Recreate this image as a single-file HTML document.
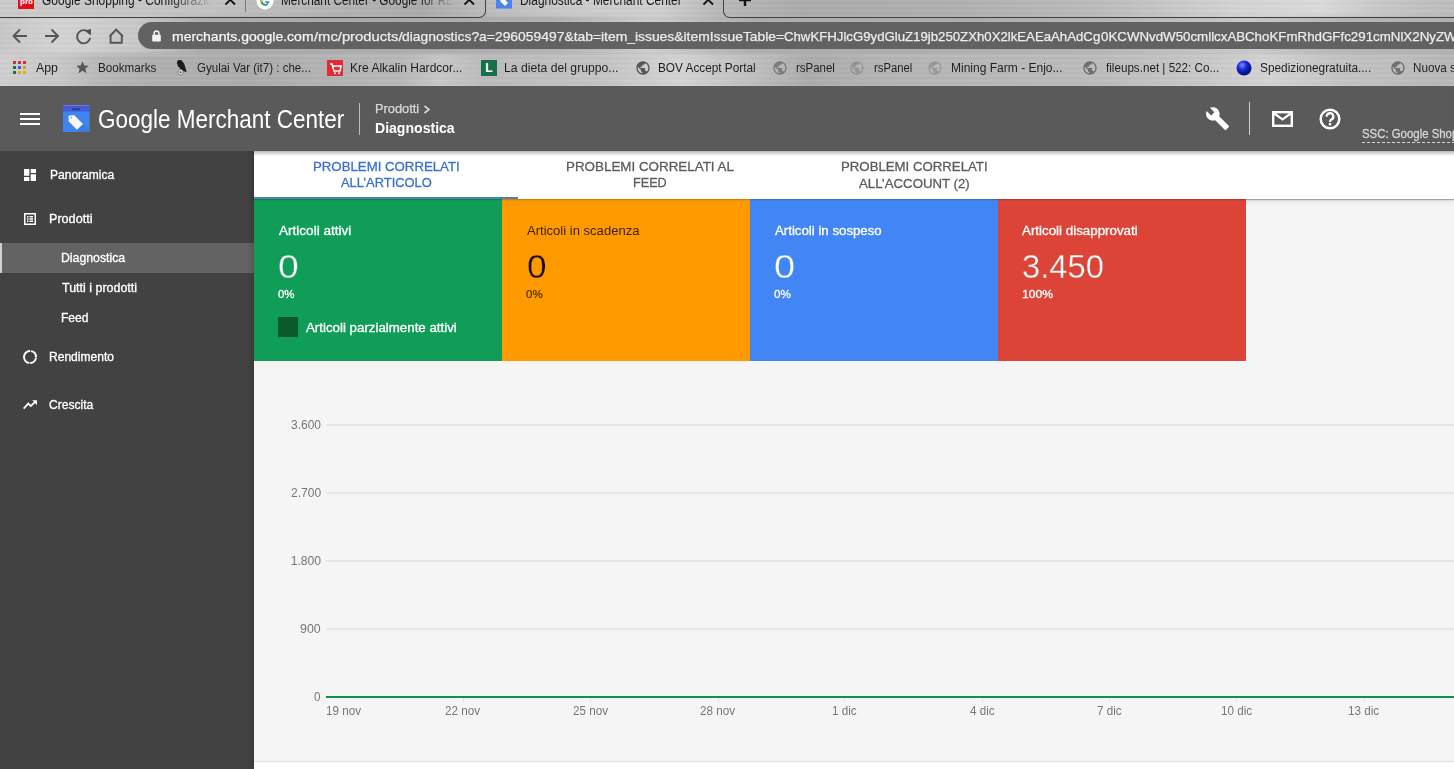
<!DOCTYPE html>
<html><head><meta charset="utf-8"><style>
*{box-sizing:border-box;margin:0;padding:0}
html,body{width:1454px;height:769px;overflow:hidden;background:#f5f5f5;font-family:"Liberation Sans",sans-serif}
.abs{position:absolute}
.t{position:absolute;white-space:nowrap;transform-origin:0 0;line-height:normal}
#chrome{position:absolute;left:0;top:0;width:1454px;height:86px;overflow:hidden;background:#c4c4c4}
#mt1{position:absolute;left:0;top:0;width:1454px;height:18px;background:linear-gradient(90deg,#cccccc 0px,#c8c8c8 100px,#c4c4c4 200px,#b8b8b8 300px,#acacac 420px,#bcbcbc 485px,#cacaca 560px,#d0d0d0 660px,#b8b8b8 720px,#acacac 800px,#b0b0b0 950px,#bcbcbc 1100px,#d4d4d4 1240px,#dadada 1320px,#c8c8c8 1380px,#bcbcbc 1454px)}
#mt2{position:absolute;left:0;top:14px;width:1454px;height:46px;-webkit-mask-image:linear-gradient(180deg,transparent 0,#000 5px,#000 38px,transparent 46px);background:linear-gradient(90deg,#c8c8c8 0px,#d4d4d4 60px,#c8c8c8 138px,#acacac 200px,#a8a8a8 400px,#b0b0b0 550px,#cccccc 650px,#acacac 750px,#acacac 970px,#b4b4b4 1100px,#c8c8c8 1250px,#b4b4b4 1340px,#b0b0b0 1454px)}
#mt3{position:absolute;left:0;top:50px;width:1454px;height:36px;-webkit-mask-image:linear-gradient(180deg,transparent 0,#000 8px);background:linear-gradient(90deg,#d0d0d0 0px,#c8c8c8 60px,#b8b8b8 100px,#b0b0b0 150px,#acacac 250px,#b4b4b4 330px,#b8b8b8 400px,#c8c8c8 440px,#bcbcbc 485px,#c4c4c4 600px,#d4d4d4 680px,#c0c0c0 750px,#acacac 810px,#b4b4b4 870px,#b8b8b8 970px,#bcbcbc 1100px,#c8c8c8 1200px,#d4d4d4 1270px,#c4c4c4 1340px,#b8b8b8 1454px)}
#streaks{position:absolute;left:0;top:0;width:1454px;height:86px;
background:repeating-linear-gradient(180deg,rgba(255,255,255,.05) 0px,rgba(255,255,255,0) 2px,rgba(0,0,0,.03) 3px,rgba(255,255,255,0) 5px)}
#header{position:absolute;left:0;top:86px;width:1454px;height:65px;background:#5a5a5a}
#side{position:absolute;left:0;top:151px;width:254px;height:618px;background:#424242}
#main{position:absolute;left:254px;top:151px;width:1200px;height:618px;background:#f5f5f5}
</style></head><body>
<div id="chrome"><div id="mt1"></div><div id="mt2"></div><div id="mt3"></div><div id="streaks"></div>
<div class="abs" style="left:0;top:17px;width:476px;height:1px;background:#404040"></div>
<div class="abs" style="left:730px;top:17px;width:724px;height:1px;background:#404040"></div>
<div class="abs" style="left:18px;top:-2px;width:16px;height:11px;background:#e0101a"></div>
<div class="abs" style="left:20px;top:-3px;font-size:8px;color:#fff;font-weight:bold">pro</div>
<div class="t" style="left:41.90px;top:-8px;font-size:14px;font-weight:normal;color:#1a1a1a;transform:scaleX(0.8558);-webkit-mask-image:linear-gradient(90deg,#000 75%,transparent 100%)">Google Shopping - Configurazio</div>
<svg class="abs" style="left:224px;top:-4px" width="13" height="11" viewBox="0 0 13 11"><path d="M1.5 -1L11 8.5M11 -1L1.5 8.5" stroke="#111" stroke-width="1.8"/></svg>
<div class="abs" style="left:245px;top:0;width:1px;height:12px;background:#777"></div>
<svg class="abs" style="left:256px;top:-8px" width="18" height="18" viewBox="0 0 18 18"><circle cx="9" cy="9" r="8.5" fill="#fff"/><path d="M13.5 9.2H9.2V11H11.7A2.9 2.9 0 1 1 11 6.5L12.3 5.2A4.8 4.8 0 1 0 13.6 9.2Z" fill="#4285f4"/><path d="M4.6 10.6A4.8 4.8 0 0 0 12.3 12.6L11 11.4A2.9 2.9 0 0 1 6.4 10Z" fill="#34a853"/><path d="M4.6 7.2A4.8 4.8 0 0 0 4.6 10.6L6.4 10A2.9 2.9 0 0 1 6.4 7.9Z" fill="#fbbc05"/><path d="M4.6 7.2L6.4 7.9A2.9 2.9 0 0 1 11 6.5L12.3 5.2A4.8 4.8 0 0 0 4.6 7.2Z" fill="#ea4335"/></svg>
<div class="t" style="left:281.16px;top:-8px;font-size:14px;font-weight:normal;color:#1a1a1a;transform:scaleX(0.8426);-webkit-mask-image:linear-gradient(90deg,#000 80%,transparent 100%)">Merchant Center - Google for RE</div>
<svg class="abs" style="left:463px;top:-4px" width="13" height="11" viewBox="0 0 13 11"><path d="M1.5 -1L11 8.5M11 -1L1.5 8.5" stroke="#111" stroke-width="1.8"/></svg>
<div class="abs" style="left:476px;top:-4px;width:10px;height:22px;border-right:1px solid #444;border-bottom:1px solid #444;border-radius:0 0 7px 0"></div>
<svg class="abs" style="left:496px;top:-5px" width="17" height="14" viewBox="0 0 17 14"><rect x="0" y="0" width="16" height="13.5" fill="#4a84ee"/><path d="M4 3L8 3.5L12 8L9 11L4.5 6.5Z" fill="#fff"/></svg>
<div class="t" style="left:519.65px;top:-8px;font-size:14px;font-weight:normal;color:#1a1a1a;transform:scaleX(0.8516);">Diagnostica - Merchant Center</div>
<svg class="abs" style="left:702px;top:-4px" width="13" height="11" viewBox="0 0 13 11"><path d="M1.5 -1L11 8.5M11 -1L1.5 8.5" stroke="#111" stroke-width="1.8"/></svg>
<div class="abs" style="left:723px;top:-4px;width:10px;height:22px;border-left:1px solid #444;border-bottom:1px solid #444;border-radius:0 0 0 7px"></div>
<svg class="abs" style="left:738px;top:-4px" width="14" height="12" viewBox="0 0 14 12"><path d="M7 -2V10M1 4H13" stroke="#111" stroke-width="2.4"/></svg>
<svg class="abs" style="left:0;top:20px" width="140" height="32" viewBox="0 20 140 32">
<g fill="none" stroke="#555" stroke-width="1.9">
<path d="M27 36H14M20 29.5L13.5 36L20 42.5"/>
<path d="M45 36H58M51.5 29.5L58 36L51.5 42.5"/>
<path d="M89.5 33.5A6.6 6.6 0 1 0 90.2 38"/>
<path d="M109.5 36.5L116.2 29.5L123 36.5M110.6 35.5V42.8H121.8V35.5"/>
</g>
<path d="M84.5 30.5L91 29L91 35.5Z" fill="#555"/>
</svg>
<div class="abs" style="left:138px;top:22px;width:1340px;height:27px;border-radius:14px;background:#626262"></div>
<svg class="abs" style="left:151.5px;top:29.5px" width="9" height="12" viewBox="0 0 9 12">
<rect x="0.2" y="4.8" width="8.6" height="6.8" rx="0.8" fill="#f4f4f4"/>
<path d="M2.1 5.2V3.4A2.4 2.4 0 0 1 6.9 3.4V5.2" fill="none" stroke="#f4f4f4" stroke-width="1.5"/></svg>
<div class="t" style="left:171.96px;top:29px;font-size:13px;font-weight:normal;color:#f6f6f6;transform:scaleX(1.0762);-webkit-text-stroke:0.25px #f6f6f6">merchants.google.com</div>
<div class="t" style="left:313.50px;top:29px;font-size:13px;font-weight:normal;color:#ececec;transform:scaleX(1.1356);-webkit-text-stroke:0.25px #ececec">/mc/products/</div>
<div class="t" style="left:402.15px;top:29px;font-size:13px;font-weight:normal;color:#ececec;transform:scaleX(1.0672);-webkit-text-stroke:0.25px #ececec">diagnostics?a=296059497&amp;tab=item_issues&amp;itemIssueTable=</div>
<div class="t" style="left:784.34px;top:29px;font-size:13px;font-weight:normal;color:#ececec;transform:scaleX(1.0154);-webkit-text-stroke:0.25px #ececec">ChwKFHJlcG9ydGluZ19jb250ZXh0X2lkEAEaAhAdCg</div>
<div class="t" style="left:1100.57px;top:29px;font-size:13px;font-weight:normal;color:#ececec;transform:scaleX(1.0235);-webkit-text-stroke:0.25px #ececec">0KCWNvdW50cmllcxAB</div>
<div class="t" style="left:1245px;top:29px;font-size:13px;color:#ececec;-webkit-text-stroke:0.25px #ececec;transform:scaleX(1.0244)">ChoKFmRhdGFfc291cmNlX2NyZWF0aW9u</div>
<svg class="abs" style="left:12px;top:60px" width="15" height="15" viewBox="0 0 15 15">
<rect x="1" y="1" width="3" height="3" fill="#c43340"/><rect x="6" y="1" width="3" height="3" fill="#d02c44"/><rect x="11" y="1" width="3" height="3" fill="#c83040"/>
<rect x="1" y="6" width="3" height="3" fill="#226e40"/><rect x="6" y="6" width="3" height="3" fill="#1f70c4"/><rect x="11" y="6" width="3" height="3" fill="#dca21e"/>
<rect x="1" y="11" width="3" height="3" fill="#226e40"/><rect x="6" y="11" width="3" height="3" fill="#e3aa1c"/><rect x="11" y="11" width="3" height="3" fill="#e3aa1c"/></svg>
<div class="t" style="left:35.90px;top:61px;font-size:12px;font-weight:normal;color:#1e1e1e;transform:scaleX(1.0297);">App</div>
<svg class="abs" style="left:75px;top:60px" width="15" height="15" viewBox="0 0 24 24"><path fill="#555" d="M12 17.27L18.18 21l-1.64-7.03L22 9.24l-7.19-.61L12 2 9.19 8.63 2 9.24l5.46 4.73L5.82 21z"/></svg>
<div class="t" style="left:98.07px;top:61px;font-size:12px;font-weight:normal;color:#1e1e1e;transform:scaleX(0.9714);">Bookmarks</div>
<svg class="abs" style="left:176px;top:59px" width="12" height="17" viewBox="0 0 12 17"><circle cx="3.6" cy="3.6" r="2.6" fill="#1a1a1a"/><path d="M1.2 3.2L5.5 1.2L8.2 4.8L10.6 12.6L9.4 13.1L5.2 10.4L1.8 7Z" fill="#1a1a1a"/><circle cx="4.6" cy="13.2" r="2.7" fill="#e0e0e0" stroke="#4a4a4a" stroke-width="0.9" stroke-dasharray="1.2 0.5"/><circle cx="4.6" cy="13.2" r="0.9" fill="#333"/></svg>
<div class="t" style="left:196.92px;top:61px;font-size:12px;font-weight:normal;color:#1e1e1e;transform:scaleX(0.9608);">Gyulai Var (it7) : che...</div>
<div class="abs" style="left:327px;top:60px;width:16px;height:16px;background:#e32b35"></div>
<svg class="abs" style="left:328px;top:61px" width="15" height="15" viewBox="0 0 15 15"><path d="M2 3H4L6 10H12L13 5H5" fill="none" stroke="#fff" stroke-width="1.5"/><circle cx="7" cy="12.3" r="1" fill="#fff"/><circle cx="11" cy="12.3" r="1" fill="#fff"/></svg>
<div class="t" style="left:350.04px;top:61px;font-size:12px;font-weight:normal;color:#1e1e1e;transform:scaleX(1.0033);">Kre Alkalin Hardcor...</div>
<div class="abs" style="left:481px;top:60px;width:16px;height:16px;background:#17704b;color:#fff;font-weight:bold;font-size:12px;text-align:center;line-height:16px">L</div>
<div class="t" style="left:504.03px;top:61px;font-size:12px;font-weight:normal;color:#1e1e1e;transform:scaleX(1.0148);">La dieta del gruppo...</div>
<svg class="abs" style="left:635px;top:60px" width="16" height="16" viewBox="0 0 24 24"><path fill="#555" d="M12 2C6.48 2 2 6.48 2 12s4.48 10 10 10 10-4.48 10-10S17.52 2 12 2zm-1 17.93c-3.95-.49-7-3.85-7-7.93 0-.62.08-1.21.21-1.79L9 15v1c0 1.1.9 2 2 2v1.93zm6.9-2.54c-.26-.81-1-1.39-1.9-1.39h-1v-3c0-.55-.45-1-1-1H8v-2h2c.55 0 1-.45 1-1V7h2c1.1 0 2-.9 2-2v-.41c2.93 1.19 5 4.06 5 7.41 0 2.08-.8 3.97-2.1 5.39z"/></svg>
<div class="t" style="left:658.06px;top:61px;font-size:12px;font-weight:normal;color:#1e1e1e;transform:scaleX(0.9828);">BOV Accept Portal</div>
<svg class="abs" style="left:772px;top:60px;opacity:.6" width="16" height="16" viewBox="0 0 24 24"><path fill="#555" d="M12 2C6.48 2 2 6.48 2 12s4.48 10 10 10 10-4.48 10-10S17.52 2 12 2zm-1 17.93c-3.95-.49-7-3.85-7-7.93 0-.62.08-1.21.21-1.79L9 15v1c0 1.1.9 2 2 2v1.93zm6.9-2.54c-.26-.81-1-1.39-1.9-1.39h-1v-3c0-.55-.45-1-1-1H8v-2h2c.55 0 1-.45 1-1V7h2c1.1 0 2-.9 2-2v-.41c2.93 1.19 5 4.06 5 7.41 0 2.08-.8 3.97-2.1 5.39z"/></svg>
<div class="t" style="left:795.51px;top:61px;font-size:12px;font-weight:normal;color:#1e1e1e;transform:scaleX(0.9557);">rsPanel</div>
<svg class="abs" style="left:849px;top:60px;opacity:.3" width="16" height="16" viewBox="0 0 24 24"><path fill="#555" d="M12 2C6.48 2 2 6.48 2 12s4.48 10 10 10 10-4.48 10-10S17.52 2 12 2zm-1 17.93c-3.95-.49-7-3.85-7-7.93 0-.62.08-1.21.21-1.79L9 15v1c0 1.1.9 2 2 2v1.93zm6.9-2.54c-.26-.81-1-1.39-1.9-1.39h-1v-3c0-.55-.45-1-1-1H8v-2h2c.55 0 1-.45 1-1V7h2c1.1 0 2-.9 2-2v-.41c2.93 1.19 5 4.06 5 7.41 0 2.08-.8 3.97-2.1 5.39z"/></svg>
<div class="t" style="left:873.92px;top:61px;font-size:12px;font-weight:normal;color:#1e1e1e;transform:scaleX(0.9404);">rsPanel</div>
<svg class="abs" style="left:927px;top:60px;opacity:.3" width="16" height="16" viewBox="0 0 24 24"><path fill="#555" d="M12 2C6.48 2 2 6.48 2 12s4.48 10 10 10 10-4.48 10-10S17.52 2 12 2zm-1 17.93c-3.95-.49-7-3.85-7-7.93 0-.62.08-1.21.21-1.79L9 15v1c0 1.1.9 2 2 2v1.93zm6.9-2.54c-.26-.81-1-1.39-1.9-1.39h-1v-3c0-.55-.45-1-1-1H8v-2h2c.55 0 1-.45 1-1V7h2c1.1 0 2-.9 2-2v-.41c2.93 1.19 5 4.06 5 7.41 0 2.08-.8 3.97-2.1 5.39z"/></svg>
<div class="t" style="left:951.24px;top:61px;font-size:12px;font-weight:normal;color:#1e1e1e;transform:scaleX(1.0016);">Mining Farm - Enjo...</div>
<svg class="abs" style="left:1082px;top:60px;opacity:.75" width="16" height="16" viewBox="0 0 24 24"><path fill="#555" d="M12 2C6.48 2 2 6.48 2 12s4.48 10 10 10 10-4.48 10-10S17.52 2 12 2zm-1 17.93c-3.95-.49-7-3.85-7-7.93 0-.62.08-1.21.21-1.79L9 15v1c0 1.1.9 2 2 2v1.93zm6.9-2.54c-.26-.81-1-1.39-1.9-1.39h-1v-3c0-.55-.45-1-1-1H8v-2h2c.55 0 1-.45 1-1V7h2c1.1 0 2-.9 2-2v-.41c2.93 1.19 5 4.06 5 7.41 0 2.08-.8 3.97-2.1 5.39z"/></svg>
<div class="t" style="left:1105.98px;top:61px;font-size:12px;font-weight:normal;color:#1e1e1e;transform:scaleX(0.9712);">fileups.net | 522: Co...</div>
<svg class="abs" style="left:1236px;top:60px" width="16" height="16" viewBox="0 0 16 16"><defs><radialGradient id="bb" cx="38%" cy="32%" r="70%"><stop offset="0" stop-color="#7d8cff"/><stop offset=".45" stop-color="#1428d0"/><stop offset="1" stop-color="#000a78"/></radialGradient></defs><circle cx="8" cy="8" r="7.5" fill="url(#bb)"/></svg>
<div class="t" style="left:1260.11px;top:61px;font-size:12px;font-weight:normal;color:#1e1e1e;transform:scaleX(0.9863);">Spedizionegratuita....</div>
<svg class="abs" style="left:1390px;top:60px;opacity:.75" width="16" height="16" viewBox="0 0 24 24"><path fill="#555" d="M12 2C6.48 2 2 6.48 2 12s4.48 10 10 10 10-4.48 10-10S17.52 2 12 2zm-1 17.93c-3.95-.49-7-3.85-7-7.93 0-.62.08-1.21.21-1.79L9 15v1c0 1.1.9 2 2 2v1.93zm6.9-2.54c-.26-.81-1-1.39-1.9-1.39h-1v-3c0-.55-.45-1-1-1H8v-2h2c.55 0 1-.45 1-1V7h2c1.1 0 2-.9 2-2v-.41c2.93 1.19 5 4.06 5 7.41 0 2.08-.8 3.97-2.1 5.39z"/></svg>
<div class="t" style="left:1413.16px;top:61px;font-size:12px;font-weight:normal;color:#1e1e1e;transform:scaleX(0.9757);">Nuova scheda</div>
</div>
<div id="header">
<div class="abs" style="left:20px;top:27px;width:20px;height:2px;background:#fff"></div>
<div class="abs" style="left:20px;top:32px;width:20px;height:2px;background:#fff"></div>
<div class="abs" style="left:20px;top:37px;width:20px;height:2px;background:#fff"></div>
<svg class="abs" style="left:63px;top:19px" width="27" height="27" viewBox="0 0 27 27">
<rect x="0" y="0" width="26.5" height="27" fill="#4084f1"/>
<path d="M14 24.5L20 19L26.5 25.5V27H16.5Z" fill="#3a74de" opacity=".6"/>
<rect x="0" y="0" width="26.5" height="6.5" fill="#4359d6"/>
<rect x="0" y="0" width="26.5" height="1" fill="#6b78e0"/>
<rect x="9" y="3.2" width="8" height="2" fill="#2b3f9e"/>
<path d="M5.5 10.8L11 10L20 19L14 24.8L5.8 16.5Z" fill="#f7f7f7"/>
<circle cx="8.3" cy="12.6" r="0.9" fill="#8aa8f0"/>
</svg>
<div class="t" style="left:97.58px;top:18.5px;font-size:25px;font-weight:normal;color:#fff;transform:scaleX(0.8995);">Google Merchant Center</div>
<div class="abs" style="left:359px;top:17px;width:1px;height:32px;background:#bdbdbd"></div>
<div class="t" style="left:375.17px;top:15.700000000000003px;font-size:12px;font-weight:normal;color:#d9d9d9;transform:scaleX(1.0682);-webkit-text-stroke:0.25px #d9d9d9;">Prodotti</div>
<svg class="abs" style="left:423px;top:105px;position:fixed" width="8" height="9" viewBox="0 0 8 9"><path d="M1.5 1L6 4.5L1.5 8" fill="none" stroke="#d9d9d9" stroke-width="1.6"/></svg>
<div class="t" style="left:375.36px;top:33px;font-size:15px;font-weight:bold;color:#fff;transform:scaleX(0.9371);">Diagnostica</div>
<svg class="abs" style="left:1204.6px;top:20px" width="25" height="25" viewBox="0 0 24 24"><path fill="#fff" d="M22.7 19l-9.1-9.1c.9-2.3.4-5-1.5-6.9-2-2-5-2.4-7.4-1.3L9 6 6 9 1.6 4.7C.4 7.1.9 10.1 2.9 12.1c1.9 1.9 4.6 2.4 6.9 1.5l9.1 9.1c.4.4 1 .4 1.4 0l2.3-2.3c.5-.4.5-1.1.1-1.4z"/></svg>
<div class="abs" style="left:1249px;top:16px;width:1px;height:33px;background:#cfcfcf"></div>
<svg class="abs" style="left:1272px;top:25px" width="21" height="16" viewBox="0 0 21 16"><rect x="1.2" y="1.2" width="18.6" height="13.6" fill="none" stroke="#fff" stroke-width="2.4"/><path d="M1.5 2L10.5 8.5L19.5 2" fill="none" stroke="#fff" stroke-width="2.2"/></svg>
<svg class="abs" style="left:1319px;top:22px" width="22" height="22" viewBox="0 0 22 22"><circle cx="11" cy="11" r="9.3" fill="none" stroke="#fff" stroke-width="2.5"/><path d="M7.7 8.6A3.3 3.3 0 1 1 12.4 11.5C11.4 12.1 11 12.5 11 13.9" fill="none" stroke="#fff" stroke-width="2.3"/><rect x="9.8" y="15" width="2.4" height="2.3" fill="#fff"/></svg>
<div class="t" style="left:1361.63px;top:40.900000000000006px;font-size:12px;font-weight:normal;color:#d6d6d6;transform:scaleX(0.9495);-webkit-text-stroke:0.3px #d6d6d6;">SSC: Google Shopping</div>
<div class="abs" style="left:1362px;top:56px;width:100px;height:1px;background:repeating-linear-gradient(90deg,#d6d6d6 0 3px,transparent 3px 5px)"></div>
</div>
<div id="side">
<svg class="abs" style="left:24px;top:18px" width="12" height="12" viewBox="3 3 18 18"><path fill="#fff" d="M3 13h8V3H3v10zm0 8h8v-6H3v6zm10 0h8V11h-8v10zm0-18v6h8V3h-8z"/></svg>
<div class="t" style="left:49.84px;top:16.80000000000001px;font-size:12px;font-weight:normal;color:#fff;transform:scaleX(1.0021);-webkit-text-stroke:0.3px #fff;">Panoramica</div>
<svg class="abs" style="left:24px;top:62px" width="12" height="12" viewBox="0 0 12 12"><path d="M0 0H12V12H0Z M1.5 1.5V10.5H10.5V1.5Z" fill="#fff" fill-rule="evenodd"/><rect x="3" y="3" width="1.5" height="1.5" fill="#fff"/><rect x="5.5" y="3" width="3.5" height="1.5" fill="#fff"/><rect x="3" y="5.25" width="1.5" height="1.5" fill="#fff"/><rect x="5.5" y="5.25" width="3.5" height="1.5" fill="#fff"/><rect x="3" y="7.5" width="1.5" height="1.5" fill="#fff"/><rect x="5.5" y="7.5" width="3.5" height="1.5" fill="#fff"/></svg>
<div class="t" style="left:49.49px;top:61px;font-size:12px;font-weight:normal;color:#fff;transform:scaleX(1.0505);-webkit-text-stroke:0.3px #fff;">Prodotti</div>
<div class="abs" style="left:0;top:92px;width:254px;height:30px;background:#636363"></div>
<div class="abs" style="left:0;top:92px;width:2px;height:30px;background:#cfcfcf"></div>
<div class="t" style="left:61.02px;top:100.19999999999999px;font-size:12px;font-weight:normal;color:#fff;transform:scaleX(1.0227);-webkit-text-stroke:0.3px #fff;">Diagnostica</div>
<div class="t" style="left:61.75px;top:130.2px;font-size:12px;font-weight:normal;color:#fff;transform:scaleX(1.0382);-webkit-text-stroke:0.3px #fff;">Tutti i prodotti</div>
<div class="t" style="left:61.04px;top:160.10000000000002px;font-size:12px;font-weight:normal;color:#fff;transform:scaleX(1.0016);-webkit-text-stroke:0.3px #fff;">Feed</div>
<svg class="abs" style="left:23px;top:199px" width="14" height="14" viewBox="0 0 14 14"><circle cx="7" cy="7" r="6" fill="none" stroke="#fff" stroke-width="2" stroke-dasharray="8.42 1 17.85 1 8.42 1" stroke-dashoffset="-0.5"/></svg>
<div class="t" style="left:49.44px;top:198.8px;font-size:12px;font-weight:normal;color:#fff;transform:scaleX(1.0038);-webkit-text-stroke:0.3px #fff;">Rendimento</div>
<svg class="abs" style="left:23px;top:249px" width="15" height="10" viewBox="0 0 15 10"><path d="M0.6 8.6L5.3 3.6L7.8 6.1L12.6 1.3" fill="none" stroke="#fff" stroke-width="1.8"/><path d="M9.3 0.2H14V4.9Z" fill="#fff"/></svg>
<div class="t" style="left:49.40px;top:246.8px;font-size:12px;font-weight:normal;color:#fff;transform:scaleX(1.0060);-webkit-text-stroke:0.3px #fff;">Crescita</div>
<div class="abs" style="left:247px;top:0;width:7px;height:618px;background:linear-gradient(90deg,rgba(0,0,0,0),rgba(0,0,0,.12))"></div>
</div>
<div id="main">
<div class="abs" style="left:0;top:0;width:1200px;height:48px;background:#fff;box-shadow:0 1px 1px rgba(0,0,0,.28),0 2px 5px rgba(0,0,0,.10)"></div>
<div class="t" style="left:58.84px;top:7.5px;font-size:13px;font-weight:normal;color:#3b6fd4;transform:scaleX(1.0170);-webkit-text-stroke:0.3px #3b6fd4;">PROBLEMI CORRELATI</div>
<div class="t" style="left:87.10px;top:24.30000000000001px;font-size:13px;font-weight:normal;color:#3b6fd4;transform:scaleX(0.9915);-webkit-text-stroke:0.3px #3b6fd4;">ALL’ARTICOLO</div>
<div class="t" style="left:311.93px;top:7.599999999999994px;font-size:13px;font-weight:normal;color:#5d5d5d;transform:scaleX(1.0298);-webkit-text-stroke:0.3px #5d5d5d;">PROBLEMI CORRELATI AL</div>
<div class="t" style="left:378.99px;top:24.400000000000006px;font-size:13px;font-weight:normal;color:#5d5d5d;transform:scaleX(0.9721);-webkit-text-stroke:0.3px #5d5d5d;">FEED</div>
<div class="t" style="left:586.64px;top:7.5px;font-size:13px;font-weight:normal;color:#5d5d5d;transform:scaleX(1.0163);-webkit-text-stroke:0.3px #5d5d5d;">PROBLEMI CORRELATI</div>
<div class="t" style="left:605.20px;top:24.5px;font-size:13px;font-weight:normal;color:#5d5d5d;transform:scaleX(1.0173);-webkit-text-stroke:0.3px #5d5d5d;">ALL’ACCOUNT (2)</div>
<div class="abs" style="left:0;top:46px;width:264px;height:2px;background:#4a7fc0"></div>
<div class="abs" style="left:0;top:48px;width:248px;height:162px;background:#0f9d58"></div>
<div class="abs" style="left:248px;top:48px;width:248px;height:162px;background:#ff9900"></div>
<div class="abs" style="left:496px;top:48px;width:248px;height:162px;background:#4285f4"></div>
<div class="abs" style="left:744px;top:48px;width:248px;height:162px;background:#db4437"></div>
<div class="t" style="left:24.80px;top:72.69999999999999px;font-size:12px;font-weight:normal;color:#fff;transform:scaleX(1.1290);-webkit-text-stroke:0.3px #fff;">Articoli attivi</div>
<div class="t" style="left:24.11px;top:96.60000000000002px;font-size:33px;font-weight:normal;color:#fff;transform:scaleX(1.1301);-webkit-text-stroke:0.35px #0f9d58;">0</div>
<div class="t" style="left:24.34px;top:136.89999999999998px;font-size:11px;font-weight:normal;color:#fff;transform:scaleX(1.0408);-webkit-text-stroke:0.3px #fff;">0%</div>
<div class="abs" style="left:24px;top:166px;width:20px;height:20px;background:#095a28"></div>
<div class="t" style="left:52.40px;top:170px;font-size:12px;font-weight:normal;color:#fff;transform:scaleX(1.1084);-webkit-text-stroke:0.3px #fff;">Articoli parzialmente attivi</div>
<div class="t" style="left:272.70px;top:72.69999999999999px;font-size:12px;font-weight:normal;color:#3b2100;transform:scaleX(1.0876);">Articoli in scadenza</div>
<div class="t" style="left:272.59px;top:96.60000000000002px;font-size:33px;font-weight:normal;color:#1c0d00;transform:scaleX(1.0669);-webkit-text-stroke:0.3px #ff9900;">0</div>
<div class="t" style="left:272.24px;top:136.8px;font-size:11px;font-weight:normal;color:#4a2a00;transform:scaleX(1.0474);-webkit-text-stroke:0.2px #4a2a00;">0%</div>
<div class="t" style="left:520.60px;top:72.69999999999999px;font-size:12px;font-weight:normal;color:#fff;transform:scaleX(1.1035);-webkit-text-stroke:0.3px #fff;">Articoli in sospeso</div>
<div class="t" style="left:519.98px;top:96.60000000000002px;font-size:33px;font-weight:normal;color:#fff;transform:scaleX(1.1490);-webkit-text-stroke:0.35px #4285f4;">0</div>
<div class="t" style="left:520.13px;top:136.8px;font-size:11px;font-weight:normal;color:#fff;transform:scaleX(1.0606);-webkit-text-stroke:0.3px #fff;">0%</div>
<div class="t" style="left:768.30px;top:72.69999999999999px;font-size:12px;font-weight:normal;color:#fff;transform:scaleX(1.1121);-webkit-text-stroke:0.3px #fff;">Articoli disapprovati</div>
<div class="t" style="left:767.79px;top:96.60000000000002px;font-size:33px;font-weight:normal;color:#fff;transform:scaleX(0.9926);-webkit-text-stroke:0.35px #db4437;">3.450</div>
<div class="t" style="left:768.25px;top:136.5px;font-size:11px;font-weight:normal;color:#fff;transform:scaleX(1.1050);-webkit-text-stroke:0.3px #fff;">100%</div>
<div class="abs" style="left:0;top:48px;width:992px;height:2px;background:linear-gradient(180deg,rgba(0,0,0,.22),rgba(0,0,0,0))"></div>
<div class="abs" style="left:0;top:0;width:1200px;height:5px;background:linear-gradient(180deg,rgba(0,0,0,.28),rgba(0,0,0,0))"></div>
<div class="t" style="left:36.92px;top:267px;font-size:12px;font-weight:normal;color:#777;transform:scaleX(0.9979);">3.600</div>
<div class="t" style="left:36.80px;top:335px;font-size:12px;font-weight:normal;color:#777;transform:scaleX(1.0021);">2.700</div>
<div class="t" style="left:36.86px;top:403px;font-size:12px;font-weight:normal;color:#777;transform:scaleX(1.0000);">1.800</div>
<div class="t" style="left:46.30px;top:471px;font-size:12px;font-weight:normal;color:#777;transform:scaleX(1.0325);">900</div>
<div class="t" style="left:60.43px;top:539px;font-size:12px;font-weight:normal;color:#777;transform:scaleX(0.9722);">0</div>
<div class="abs" style="left:72px;top:273px;width:1130px;height:2px;background:#e6e6e6"></div>
<div class="abs" style="left:72px;top:341px;width:1130px;height:2px;background:#e6e6e6"></div>
<div class="abs" style="left:72px;top:409px;width:1130px;height:2px;background:#e6e6e6"></div>
<div class="abs" style="left:72px;top:477px;width:1130px;height:2px;background:#e6e6e6"></div>
<div class="abs" style="left:72px;top:545px;width:1130px;height:2px;background:#0d924f"></div>
<div class="t" style="left:71.99px;top:552.7px;font-size:12px;font-weight:normal;color:#777;transform:scaleX(0.9699);">19 nov</div>
<div class="t" style="left:191.22px;top:552.7px;font-size:12px;font-weight:normal;color:#777;transform:scaleX(0.9718);">22 nov</div>
<div class="abs" style="left:209px;top:547px;width:1px;height:3px;background:#ddd"></div>
<div class="t" style="left:318.52px;top:552.7px;font-size:12px;font-weight:normal;color:#777;transform:scaleX(0.9718);">25 nov</div>
<div class="abs" style="left:336px;top:547px;width:1px;height:3px;background:#ddd"></div>
<div class="t" style="left:445.92px;top:552.7px;font-size:12px;font-weight:normal;color:#777;transform:scaleX(0.9718);">28 nov</div>
<div class="abs" style="left:464px;top:547px;width:1px;height:3px;background:#ddd"></div>
<div class="t" style="left:577.96px;top:552.7px;font-size:12px;font-weight:normal;color:#777;transform:scaleX(0.9718);">1 dic</div>
<div class="abs" style="left:590px;top:547px;width:1px;height:3px;background:#ddd"></div>
<div class="t" style="left:716.06px;top:552.7px;font-size:12px;font-weight:normal;color:#777;transform:scaleX(0.9718);">4 dic</div>
<div class="abs" style="left:728px;top:547px;width:1px;height:3px;background:#ddd"></div>
<div class="t" style="left:842.68px;top:552.7px;font-size:12px;font-weight:normal;color:#777;transform:scaleX(0.9718);">7 dic</div>
<div class="abs" style="left:855px;top:547px;width:1px;height:3px;background:#ddd"></div>
<div class="t" style="left:966.50px;top:552.7px;font-size:12px;font-weight:normal;color:#777;transform:scaleX(0.9718);">10 dic</div>
<div class="abs" style="left:982px;top:547px;width:1px;height:3px;background:#ddd"></div>
<div class="t" style="left:1093.70px;top:552.7px;font-size:12px;font-weight:normal;color:#777;transform:scaleX(0.9718);">13 dic</div>
<div class="abs" style="left:1110px;top:547px;width:1px;height:3px;background:#ddd"></div>
<div class="abs" style="left:0;top:610px;width:1200px;height:1px;background:#dedede"></div>
<div class="abs" style="left:0;top:611px;width:1200px;height:7px;background:#fff"></div>
</div>
</body></html>
